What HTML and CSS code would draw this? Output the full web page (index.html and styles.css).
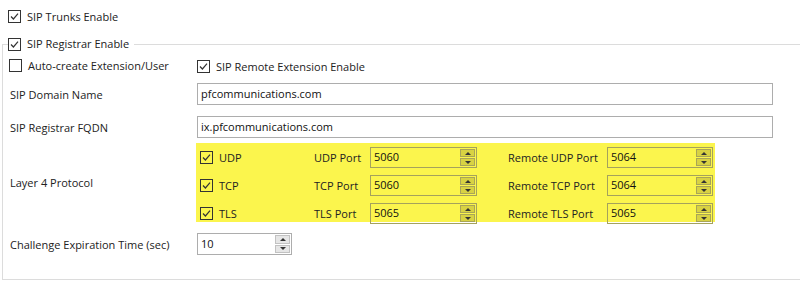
FILE: index.html
```html
<!DOCTYPE html>
<html lang="en">
<head>
  <meta charset="utf-8">
  <title>SIP Settings</title>
  <link rel="stylesheet" href="styles.css">
</head>
<body>
  <div class="top-row">
    <label class="check">
      <svg width="13" height="13" viewBox="0 0 13 13"><rect x="0.5" y="0.5" width="12" height="12" fill="none" stroke="#333"/><path d="M3 6.5L5.4 9L10 3.6" fill="none" stroke="#333" stroke-width="1.2"/></svg>
      SIP Trunks Enable
    </label>
  </div>

  <fieldset class="group">
    <legend>
      <label class="check">
        <svg width="13" height="13" viewBox="0 0 13 13"><rect x="0.5" y="0.5" width="12" height="12" fill="none" stroke="#333"/><path d="M3 6.5L5.4 9L10 3.6" fill="none" stroke="#333" stroke-width="1.2"/></svg>
        SIP Registrar Enable
      </label>
    </legend>

    <!-- options -->
    <div class="row">
      <div class="row-label">
        <label class="check">
          <svg width="13" height="13" viewBox="0 0 13 13"><rect x="0.5" y="0.5" width="12" height="12" fill="none" stroke="#333"/></svg>
          Auto-create Extension/User
        </label>
      </div>
      <label class="check">
        <svg width="13" height="13" viewBox="0 0 13 13"><rect x="0.5" y="0.5" width="12" height="12" fill="none" stroke="#333"/><path d="M3 6.5L5.4 9L10 3.6" fill="none" stroke="#333" stroke-width="1.2"/></svg>
        SIP Remote Extension Enable
      </label>
    </div>

    <div class="row row-domain">
      <div class="row-label">SIP Domain Name</div>
      <div class="field field-wide"><input type="text" value="pfcommunications.com"></div>
    </div>

    <div class="row row-fqdn">
      <div class="row-label">SIP Registrar FQDN</div>
      <div class="field field-wide"><input type="text" value="ix.pfcommunications.com"></div>
    </div>

    <div class="row row-l4">
      <div class="row-label">Layer 4 Protocol</div>
      <div class="hl">
        <label class="check">
          <svg width="13" height="13" viewBox="0 0 13 13"><rect x="0.5" y="0.5" width="12" height="12" fill="none" stroke="#333"/><path d="M3 6.5L5.4 9L10 3.6" fill="none" stroke="#333" stroke-width="1.2"/></svg>
          UDP
        </label>
        <div class="plabel">UDP Port</div>
        <div class="field"><input type="text" value="5060"><div class="spin"><span class="up"></span><span class="down"></span></div></div>
        <div class="plabel remote">Remote UDP Port</div>
        <div class="field"><input type="text" value="5064"><div class="spin"><span class="up"></span><span class="down"></span></div></div>

        <label class="check">
          <svg width="13" height="13" viewBox="0 0 13 13"><rect x="0.5" y="0.5" width="12" height="12" fill="none" stroke="#333"/><path d="M3 6.5L5.4 9L10 3.6" fill="none" stroke="#333" stroke-width="1.2"/></svg>
          TCP
        </label>
        <div class="plabel">TCP Port</div>
        <div class="field"><input type="text" value="5060"><div class="spin"><span class="up"></span><span class="down"></span></div></div>
        <div class="plabel remote">Remote TCP Port</div>
        <div class="field"><input type="text" value="5064"><div class="spin"><span class="up"></span><span class="down"></span></div></div>

        <label class="check">
          <svg width="13" height="13" viewBox="0 0 13 13"><rect x="0.5" y="0.5" width="12" height="12" fill="none" stroke="#333"/><path d="M3 6.5L5.4 9L10 3.6" fill="none" stroke="#333" stroke-width="1.2"/></svg>
          TLS
        </label>
        <div class="plabel">TLS Port</div>
        <div class="field"><input type="text" value="5065"><div class="spin"><span class="up"></span><span class="down"></span></div></div>
        <div class="plabel remote">Remote TLS Port</div>
        <div class="field"><input type="text" value="5065"><div class="spin"><span class="up"></span><span class="down"></span></div></div>
      </div>
    </div>

    <div class="row row-challenge">
      <div class="row-label">Challenge Expiration Time (sec)</div>
      <div class="field field-short"><input type="text" value="10"><div class="spin"><span class="up"></span><span class="down"></span></div></div>
    </div>
  </fieldset>
</body>
</html>
```

FILE: styles.css
```css
/* reset */
* { margin: 0; padding: 0; box-sizing: border-box; }
body {
  font-family: "Open Sans", "Noto Sans", sans-serif;
  font-size: 11px;
  color: #222;
  background: #fff;
  width: 800px;
  height: 287px;
  overflow: hidden;
}

.top-row {
  height: 32px;
  display: flex;
  align-items: center;
  padding-left: 8px;
}

.check {
  display: inline-flex;
  align-items: center;
  gap: 6px;
  white-space: nowrap;
}
.check svg { flex: none; }

/* group box */
.group {
  margin: 4px 0 0 2px;
  border: 1px solid #dcdcdc;
  border-right: none;
  padding: 3px 0 24px 6px;
  min-width: 0;
}
.group legend {
  margin-left: -1px;
  padding-right: 5px;
  line-height: 16px;
  display: flex;
}

.row {
  display: flex;
  align-items: center;
  height: 22px;
}
.row-label {
  width: 188px;
  flex: none;
  padding-left: 1px;
  white-space: nowrap;
}
.row .row-label .check { margin-left: -1px; }
.row-domain { margin-top: 6px; }
.row-fqdn { margin-top: 11px; }
.row-l4 { margin-top: 5px; height: 79px; }
.row-challenge { margin-top: 11px; }

/* inputs */
.field {
  display: flex;
  height: 22px;
  border: 1px solid #adadad;
  background: #fff;
}
.field input {
  flex: 1;
  min-width: 0;
  border: none;
  outline: none;
  background: transparent;
  font: inherit;
  color: #111;
  padding: 0 3px 2px;
}
.field-wide { width: 576px; }
.field-short { width: 95px; }

.spin {
  width: 15px;
  flex: none;
  display: flex;
  flex-direction: column;
  gap: 1px;
  margin: 1px 1px 1px 0;
}
.spin span {
  flex: 1;
  display: flex;
  align-items: center;
  justify-content: center;
  background: #e6e6e6;
  border: 1px solid #c2c2c2;
}
.spin .up::after,
.spin .down::after {
  content: "";
  width: 0;
  height: 0;
  border-left: 3px solid transparent;
  border-right: 3px solid transparent;
}
.spin .up::after { border-bottom: 3px solid #333; }
.spin .down::after { border-top: 3px solid #333; }

/* highlighted protocol block */
.hl {
  margin-left: -1px;
  height: 79px;
  padding: 4px 2px 0 4px;
  background: #fbf54d;
  display: grid;
  grid-template-columns: 114px 56px 107px 130px 106px;
  grid-auto-rows: 21px;
  row-gap: 7px;
  align-items: center;
}
.hl .field {
  height: 21px;
  background: transparent;
  border-color: #a5a25c;
}
.hl .spin span {
  background: #d8d243;
  border-color: #a9a557;
}
.plabel { white-space: nowrap; }
.plabel.remote { padding-left: 31px; }
```
